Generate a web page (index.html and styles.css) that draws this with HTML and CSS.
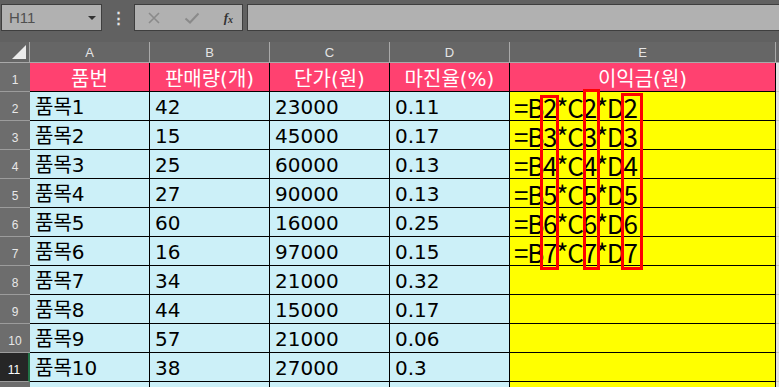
FILE: index.html
```html
<!DOCTYPE html>
<html>
<head>
  <meta charset="UTF-8">
  <title>이익금 계산</title>
  <link rel="stylesheet" href="styles.css">
</head>
<body>

<div class="toolbar">
  <div class="name-box">
    <span>H11</span>
    <span class="caret"></span>
  </div>
  <div class="grip">⋮</div>
  <div class="fx-buttons">
    <svg width="14" height="14" viewBox="0 0 14 14"><path d="M2 2 L12 12 M12 2 L2 12" stroke="#8a8a8a" stroke-width="1.6" fill="none"/></svg>
    <svg width="16" height="14" viewBox="0 0 16 14"><path d="M1.5 7.5 L6 11.5 L14.5 2.5" stroke="#8a8a8a" stroke-width="2" fill="none"/></svg>
    <span class="fx">f<sub>x</sub></span>
  </div>
  <div class="formula-input"></div>
</div>

<div class="sheet">
  <!-- column headers -->
  <div class="corner"><span class="tri"></span></div>
  <div class="col-head">A</div>
  <div class="col-head">B</div>
  <div class="col-head">C</div>
  <div class="col-head">D</div>
  <div class="col-head">E</div>
  <div class="col-head rest"></div>

  <!-- row 1 -->
  <div class="row-head">1</div>
  <div class="cell title">품번</div>
  <div class="cell title">판매량(개)</div>
  <div class="cell title">단가(원)</div>
  <div class="cell title">마진율(%)</div>
  <div class="cell title">이익금(원)</div>
  <div class="cell rest"></div>

  <div class="row-head">2</div>
  <div class="cell data">품목1</div>
  <div class="cell data">42</div>
  <div class="cell data">23000</div>
  <div class="cell data">0.11</div>
  <div class="cell calc">=B2*C2*D2</div>
  <div class="cell rest"></div>

  <div class="row-head">3</div>
  <div class="cell data">품목2</div>
  <div class="cell data">15</div>
  <div class="cell data">45000</div>
  <div class="cell data">0.17</div>
  <div class="cell calc">=B3*C3*D3</div>
  <div class="cell rest"></div>

  <div class="row-head">4</div>
  <div class="cell data">품목3</div>
  <div class="cell data">25</div>
  <div class="cell data">60000</div>
  <div class="cell data">0.13</div>
  <div class="cell calc">=B4*C4*D4</div>
  <div class="cell rest"></div>

  <div class="row-head">5</div>
  <div class="cell data">품목4</div>
  <div class="cell data">27</div>
  <div class="cell data">90000</div>
  <div class="cell data">0.13</div>
  <div class="cell calc">=B5*C5*D5</div>
  <div class="cell rest"></div>

  <div class="row-head">6</div>
  <div class="cell data">품목5</div>
  <div class="cell data">60</div>
  <div class="cell data">16000</div>
  <div class="cell data">0.25</div>
  <div class="cell calc">=B6*C6*D6</div>
  <div class="cell rest"></div>

  <div class="row-head">7</div>
  <div class="cell data">품목6</div>
  <div class="cell data">16</div>
  <div class="cell data">97000</div>
  <div class="cell data">0.15</div>
  <div class="cell calc">=B7*C7*D7</div>
  <div class="cell rest"></div>

  <div class="row-head">8</div>
  <div class="cell data">품목7</div>
  <div class="cell data">34</div>
  <div class="cell data">21000</div>
  <div class="cell data">0.32</div>
  <div class="cell calc"></div>
  <div class="cell rest"></div>

  <div class="row-head">9</div>
  <div class="cell data">품목8</div>
  <div class="cell data">44</div>
  <div class="cell data">15000</div>
  <div class="cell data">0.17</div>
  <div class="cell calc"></div>
  <div class="cell rest"></div>

  <div class="row-head">10</div>
  <div class="cell data">품목9</div>
  <div class="cell data">57</div>
  <div class="cell data">21000</div>
  <div class="cell data">0.06</div>
  <div class="cell calc"></div>
  <div class="cell rest"></div>

  <div class="row-head active">11</div>
  <div class="cell data">품목10</div>
  <div class="cell data">38</div>
  <div class="cell data">27000</div>
  <div class="cell data">0.3</div>
  <div class="cell calc"></div>
  <div class="cell rest"></div>

  <div class="row-head">12</div>
  <div class="cell data"></div>
  <div class="cell data"></div>
  <div class="cell data"></div>
  <div class="cell data"></div>
  <div class="cell calc"></div>
  <div class="cell rest"></div>

  <!-- red boxes marking the row numbers in the formulas (E2:E7) -->
  <div class="ref-marks">
    <div class="mark mark-b"></div>
    <div class="mark mark-c"></div>
    <div class="mark mark-d"></div>
  </div>
</div>

</body>
</html>
```

FILE: styles.css
```css
html, body {
	margin: 0;
	height: 100%;
	overflow: hidden;
	background-color: #636363;
}

/* Formula bar at the top */
.toolbar {
	height: 42px;
	display: flex;
	align-items: flex-start;
	padding-top: 4px;
	box-sizing: border-box;
	background-color: #616161;
	font-family: "Liberation Sans", Arial, sans-serif;
}

.name-box {
	margin-left: 1px;
	width: 101px;
	height: 27px;
	box-sizing: border-box;
	border: 1px solid #3e3e3e;
	background-color: #b1b1b1;
	display: flex;
	align-items: center;
	justify-content: space-between;
	padding: 0 5px 0 7px;
	font-size: 15px;
	color: #505050;
}

.caret {
	width: 0;
	height: 0;
	border-left: 4px solid transparent;
	border-right: 4px solid transparent;
	border-top: 4px solid #333;
}

.grip {
	width: 32px;
	text-align: center;
	color: #e6e6e6;
	font-size: 15px;
	line-height: 27px;
	font-weight: bold;
}

.fx-buttons {
	width: 109px;
	height: 27px;
	box-sizing: border-box;
	border: 1px solid #3e3e3e;
	background-color: #b1b1b1;
	display: flex;
	align-items: center;
	justify-content: space-between;
	padding: 0 9px 0 12px;
}

.fx {
	font-family: "Liberation Serif", serif;
	font-style: italic;
	font-weight: bold;
	font-size: 13px;
	color: #333;
}

.fx sub {
	font-size: 10px;
	vertical-align: -1px;
}

.formula-input {
	flex: 1;
	margin-left: 4px;
	height: 27px;
	box-sizing: border-box;
	border: 1px solid #3e3e3e;
	border-right: none;
	background-color: #b1b1b1;
}

/* Worksheet grid */
.sheet {
	position: relative;
	display: grid;
	grid-template-columns: 30px 120px 120px 120px 120px 266px 1fr;
	grid-template-rows: 21px repeat(12, 29px);
	font-family: "DejaVu Sans", "Noto Sans CJK KR", sans-serif;
}

.corner {
	position: relative;
	border-right: 1px solid #a9a9a9;
	border-bottom: 1px solid #a9a9a9;
	background-color: #666;
}

.corner .tri {
	position: absolute;
	right: 3px;
	bottom: 3px;
	width: 0;
	height: 0;
	border-left: 14px solid transparent;
	border-bottom: 14px solid #ececec;
}

.col-head {
	background-color: #666;
	border-right: 1px solid #a9a9a9;
	border-bottom: 1px solid #a9a9a9;
	color: #e4e4e4;
	font-family: "Liberation Sans", Arial, sans-serif;
	font-size: 13px;
	display: flex;
	align-items: center;
	justify-content: center;
	padding-top: 1px;
}

.col-head.rest {
	border-right: none;
}

.row-head {
	background-color: #6d6d6d;
	border-bottom: 1px solid #9c9c9c;
	color: #e8e8e8;
	font-family: "Liberation Sans", Arial, sans-serif;
	font-size: 12px;
	display: flex;
	align-items: flex-end;
	justify-content: center;
	padding-bottom: 4px;
	box-sizing: border-box;
}

.row-head.active {
	background-color: #262626;
	color: #fff;
	border-right: 2px solid #217346;
}

.cell {
	border-right: 1px solid #000;
	border-bottom: 1px solid #000;
	display: flex;
	align-items: flex-end;
	padding: 0 0 1px 5px;
	box-sizing: border-box;
	font-size: 20px;
	line-height: 1.2;
	color: #000;
	white-space: nowrap;
	overflow: hidden;
}

.cell.title {
	background-color: #ff4170;
	color: #fff;
	justify-content: center;
	padding-left: 0;
	padding-bottom: 0;
}

.cell.data {
	background-color: #ccf0f8;
}

.cell.calc {
	background-color: #ffff00;
	font-family: "Noto Sans CJK KR", sans-serif;
	font-size: 26px;
	line-height: 1;
	letter-spacing: -1.2px;
	padding-left: 4px;
	padding-bottom: 0;
	overflow: visible;
}

.cell.rest {
	background-color: #e3e3e3;
	border-right: none;
	border-bottom: 1px solid #c6c6c6;
}

/* Overlay with the red reference boxes; an absolutely placed grid child
   takes E2:E7 as its box without taking part in auto placement */
.ref-marks {
	position: absolute;
	grid-column: 6;
	grid-row: 3 / 9;
	inset: 0;
	z-index: 1;
	pointer-events: none;
}

.mark {
	position: absolute;
	border: 3px solid #ff0000;
	box-sizing: border-box;
}

.mark-b {
	left: 30px;
	top: 3px;
	width: 19px;
	height: 175px;
}

.mark-c {
	left: 73px;
	top: -3px;
	width: 17px;
	height: 181px;
}

.mark-d {
	left: 111px;
	top: 1px;
	width: 22px;
	height: 177px;
}
```
